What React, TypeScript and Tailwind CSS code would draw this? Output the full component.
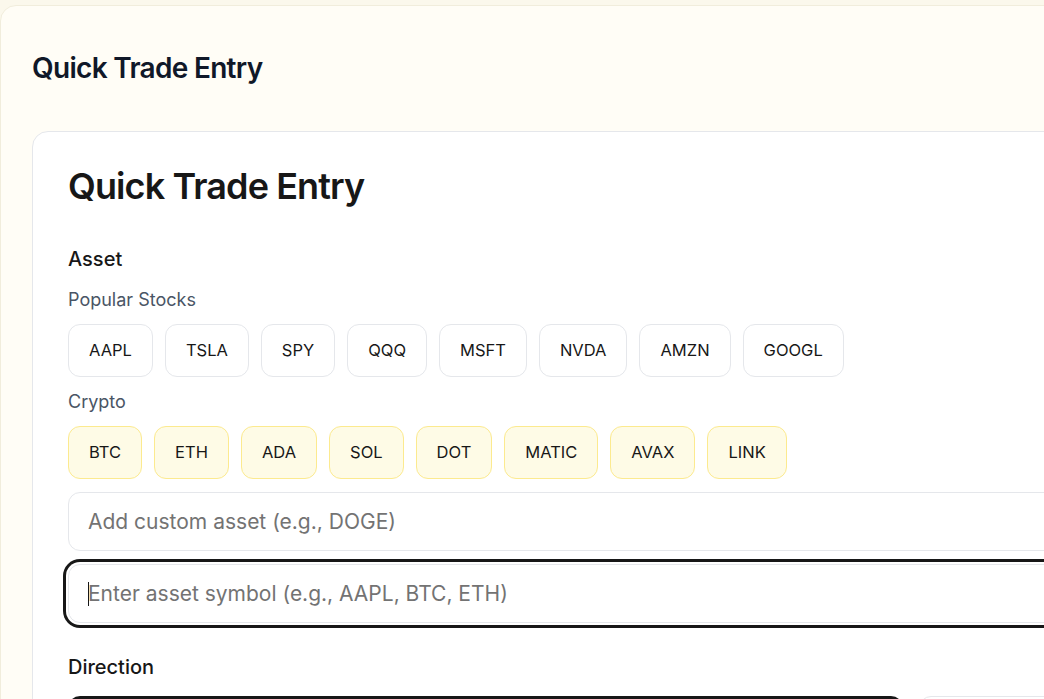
import { useState } from 'react';

const stocks = ['AAPL', 'TSLA', 'SPY', 'QQQ', 'MSFT', 'NVDA', 'AMZN', 'GOOGL'];
const crypto = ['BTC', 'ETH', 'ADA', 'SOL', 'DOT', 'MATIC', 'AVAX', 'LINK'];

function AssetChip({ symbol, isCrypto }: { symbol: string; isCrypto?: boolean }) {
  return (
    <button
      className={`h-[53px] px-5 rounded-xl border text-[16.5px] font-normal text-neutral-900 ${
        isCrypto ? 'bg-[#fefbe6] border-[#fcea8f]' : 'bg-white border-gray-200'
      }`}
    >
      {symbol}
    </button>
  );
}

export default function App() {
  const [direction, setDirection] = useState<'long' | 'short'>('long');

  return (
    <div
      className="w-screen h-screen overflow-hidden bg-[#fbf8ec]"
      style={{ fontFamily: 'Inter, "Noto Sans", sans-serif' }}
    >
      <div className="w-[1900px] mt-[5px] rounded-2xl border border-[#f1eddc] bg-[#fffdf6] pl-[31px] pt-[44px]">
        {/* Panel header */}
        <h2 className="text-[28px] leading-9 font-semibold tracking-tight text-gray-900 mb-[45px]">
          Quick Trade Entry
        </h2>

        {/* Card */}
        <div className="w-[1758px] rounded-2xl border border-gray-200 bg-white px-[35px] pt-[34px] pb-8">
          <h1 className="text-4xl leading-10 font-semibold tracking-tight text-neutral-900 mb-[39px]">
            Quick Trade Entry
          </h1>

          {/* Asset */}
          <div className="flex flex-col">
            <label className="text-xl leading-7 font-medium text-neutral-900">Asset</label>
            <div className="mt-[13px] text-lg leading-7 text-gray-600">Popular Stocks</div>
            <div className="mt-[10px] flex gap-3">
              {stocks.map((s) => (
                <AssetChip key={s} symbol={s} />
              ))}
            </div>
            <div className="mt-[11px] text-lg leading-7 text-gray-600">Crypto</div>
            <div className="mt-[10px] flex gap-3">
              {crypto.map((s) => (
                <AssetChip key={s} symbol={s} isCrypto />
              ))}
            </div>
            <input
              className="mt-[13px] h-[59px] w-full rounded-xl border border-gray-200 bg-white px-[19px] text-[21px] text-neutral-900 placeholder:text-neutral-500 outline-none"
              placeholder="Add custom asset (e.g., DOGE)"
            />
            <div className="relative mt-[13px]">
              <input
                className="h-[59px] w-full rounded-xl border border-gray-200 bg-white px-[19px] text-[21px] text-neutral-900 placeholder:text-neutral-500 outline-none ring-3 ring-neutral-900 ring-offset-2 caret-transparent"
                placeholder="Enter asset symbol (e.g., AAPL, BTC, ETH)"
              />
              {/* caret */}
              <span className="absolute left-[20px] top-[18px] h-[24px] w-px bg-neutral-900" />
            </div>
          </div>

          {/* Direction */}
          <div className="mt-[30px]">
            <label className="block text-xl leading-7 font-medium text-neutral-900 mb-[15px]">Direction</label>
            <div className="grid grid-cols-2 gap-4">
              <button
                onClick={() => setDirection('long')}
                className={`h-14 rounded-xl text-lg font-medium ${
                  direction === 'long' ? 'bg-neutral-900 text-white' : 'bg-white border border-gray-200 text-neutral-900'
                }`}
              >
                Long
              </button>
              <button
                onClick={() => setDirection('short')}
                className={`h-14 rounded-xl text-lg font-medium ${
                  direction === 'short' ? 'bg-neutral-900 text-white' : 'bg-white border border-gray-200 text-neutral-900'
                }`}
              >
                Short
              </button>
            </div>
          </div>
        </div>
      </div>
    </div>
  );
}
